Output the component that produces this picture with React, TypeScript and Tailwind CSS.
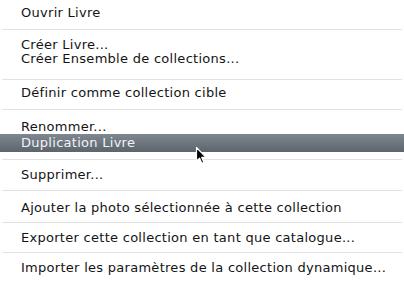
import React from "react";

const Line = ({ children, className = "" }: { children: React.ReactNode; className?: string }) => (
  <div className={"h-[13px] leading-[13px] pl-[21px] whitespace-nowrap " + className}>{children}</div>
);

const Sep = () => <div className="h-px mx-[2px] bg-[#e2e2e2]" />;

export default function App() {
  return (
    <div
      className="relative w-[404px] h-[282px] bg-white text-[#141414] text-[13px] tracking-[0.28px] overflow-hidden"
      style={{ fontFamily: '"DejaVu Sans", sans-serif' }}
    >
      <div className="pt-[6px] pb-[10px]">
        <Line>Ouvrir Livre</Line>
      </div>
      <Sep />
      <div className="pt-[8px] pb-[14px]">
        <Line>Créer Livre...</Line>
        <Line className="mt-px">Créer Ensemble de collections...</Line>
      </div>
      <Sep />
      <div className="pt-[6px] pb-[10px]">
        <Line>Définir comme collection cible</Line>
      </div>
      <Sep />
      <div className="pt-[10px] pb-[7px]">
        <Line>Renommer...</Line>
        <div className="mt-px h-[18px] leading-[18px] pl-[21px] whitespace-nowrap text-[#f2f3f5] bg-gradient-to-b from-[#7f8790] to-[#5c646e]">
          Duplication Livre
        </div>
      </div>
      <Sep />
      <div className="pt-[8px] pb-[9px]">
        <Line>Supprimer...</Line>
      </div>
      <Sep />
      <div className="pt-[10px] pb-[8px]">
        <Line>Ajouter la photo sélectionnée à cette collection</Line>
      </div>
      <Sep />
      <div className="pt-[8px] pb-[8px]">
        <Line>Exporter cette collection en tant que catalogue...</Line>
      </div>
      <Sep />
      <div className="pt-[8px] pb-[8px]">
        <Line>Importer les paramètres de la collection dynamique...</Line>
      </div>
      <svg className="absolute left-[195px] top-[146px]" width="13" height="19" viewBox="0 0 13 19">
        <path d="M1.5 1.5 L1.5 15 L4.6 12.2 L6.8 17.2 L8.8 16.3 L6.7 11.4 L11 11.4 Z" fill="#000" stroke="#fff" strokeWidth="1.2" strokeLinejoin="round" />
      </svg>
    </div>
  );
}
